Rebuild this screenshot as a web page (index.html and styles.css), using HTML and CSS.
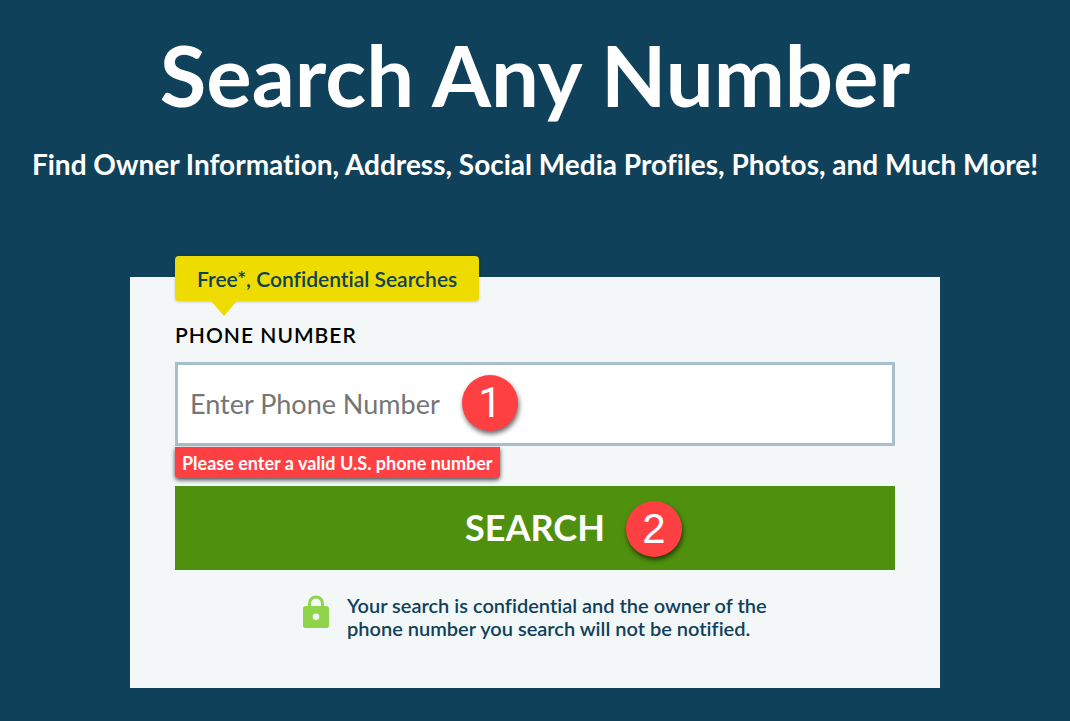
FILE: index.html
```html
<!DOCTYPE html>
<html lang="en">
<head>
<meta charset="utf-8">
<meta name="viewport" content="width=device-width, initial-scale=1">
<title>Search Any Number</title>
<link rel="stylesheet" href="styles.css">
</head>
<body>
<main class="page">
  <h1 class="title">Search Any Number</h1>
  <p class="subtitle">Find Owner Information, Address, Social Media Profiles, Photos, and Much More!</p>
  <form class="card" novalidate>
    <div class="flag">Free*, Confidential Searches</div>
    <label class="label" for="phone">PHONE NUMBER</label>
    <div class="field">
      <input class="input" id="phone" type="tel" placeholder="Enter Phone Number" aria-describedby="phone-error">
      <span class="step step-input">1</span>
    </div>
    <div class="error" id="phone-error">Please enter a valid U.S. phone number</div>
    <div class="field">
      <button class="search" type="submit">SEARCH</button>
      <span class="step step-search">2</span>
    </div>
    <div class="notice">
      <svg class="lock" viewBox="0 0 26 34" aria-hidden="true"><path fill-rule="evenodd" d="M5 11V8.500a8 8 0 0 1 16 0V11h2.500a2.500 2.500 0 0 1 2.500 2.500v17a2.500 2.500 0 0 1-2.500 2.500h-21A2.500 2.500 0 0 1 0 30.500v-17A2.500 2.500 0 0 1 2.500 11zM8 11h10V8.500a5 5 0 0 0-10 0zM13 18.500a3.300 3.300 0 1 0 0 6.600a3.300 3.300 0 0 0 0-6.600z"/></svg>
      <p class="notice-text">Your search is confidential and the owner of the phone number you search will not be notified.</p>
    </div>
  </form>
</main>
</body>
</html>
```
FILE: styles.css
```css
* { box-sizing: border-box; }
body { margin: 0; min-height: 100vh; background: #10415a; color: #fff; font-family: Lato, "Liberation Sans", sans-serif; font-variant-ligatures: none; }
.page { display: flex; flex-direction: column; align-items: center; padding: 20px 24px 32px; }
.title { margin: 0; font-size: 85px; line-height: 108px; font-weight: 700; text-align: center; }
.subtitle { margin: 18px 0 0; font-size: 28px; line-height: 36px; font-weight: 700; text-align: center; }
.card { display: flex; flex-direction: column; align-items: flex-start; width: 100%; max-width: 810px; margin-top: 95px; padding: 0 45px 48px; background: #f3f7f8; color: #10415a; }
.flag { position: relative; margin-top: -21px; padding: 0 22px; border-radius: 4px; background: #eedb00; font-size: 21px; line-height: 45px; font-weight: 600; box-shadow: 0 1px 3px rgba(0, 0, 0, .2); }
.flag::after { content: ""; position: absolute; left: 36px; top: 100%; border: solid transparent; border-width: 15px 13px 0; border-top-color: #eedb00; }
.label { margin: 21px 0 15px; color: #000; font-size: 21px; line-height: 25px; font-weight: 600; letter-spacing: 1px; }
.field { position: relative; width: 100%; }
.input { display: block; width: 100%; height: 84px; padding: 0 12px 2px; border: 3px solid #a6bfcb; border-radius: 0; background: #fff; color: #222; font-family: inherit; font-size: 27px; }
.input::placeholder { color: #757575; opacity: 1; }
.error { position: relative; margin: 1px 0 8px; padding: 1px 7px 0; border-radius: 0 0 4px 4px; background: #ff4043; color: #fff; font-size: 18px; line-height: 30px; font-weight: 700; box-shadow: 0 2px 4px rgba(0, 0, 0, .7); }
.search { display: block; width: 100%; height: 84px; padding: 0 0 2px; border: 0; background: #4f910f; color: #fff; font-family: inherit; font-size: 36px; font-weight: 700; }
.step { position: absolute; width: 56px; height: 56px; border-radius: 50%; background: #ff4043; color: #fff; font-family: "Liberation Sans", sans-serif; font-size: 42px; line-height: 56px; text-align: center; box-shadow: 1px 3px 5px rgba(0, 0, 0, .6); }
.step-input { left: 287px; top: 13px; font-family: Roboto, sans-serif; }
.step-search { left: 451px; top: 15px; }
.notice { display: flex; align-self: center; gap: 18px; margin-top: 24px; }
.lock { flex: none; width: 26px; height: 34px; margin-top: 1px; fill: #90d44c; }
.notice-text { max-width: 420px; margin: 0; font-size: 20px; line-height: 23px; font-weight: 600; }
```
